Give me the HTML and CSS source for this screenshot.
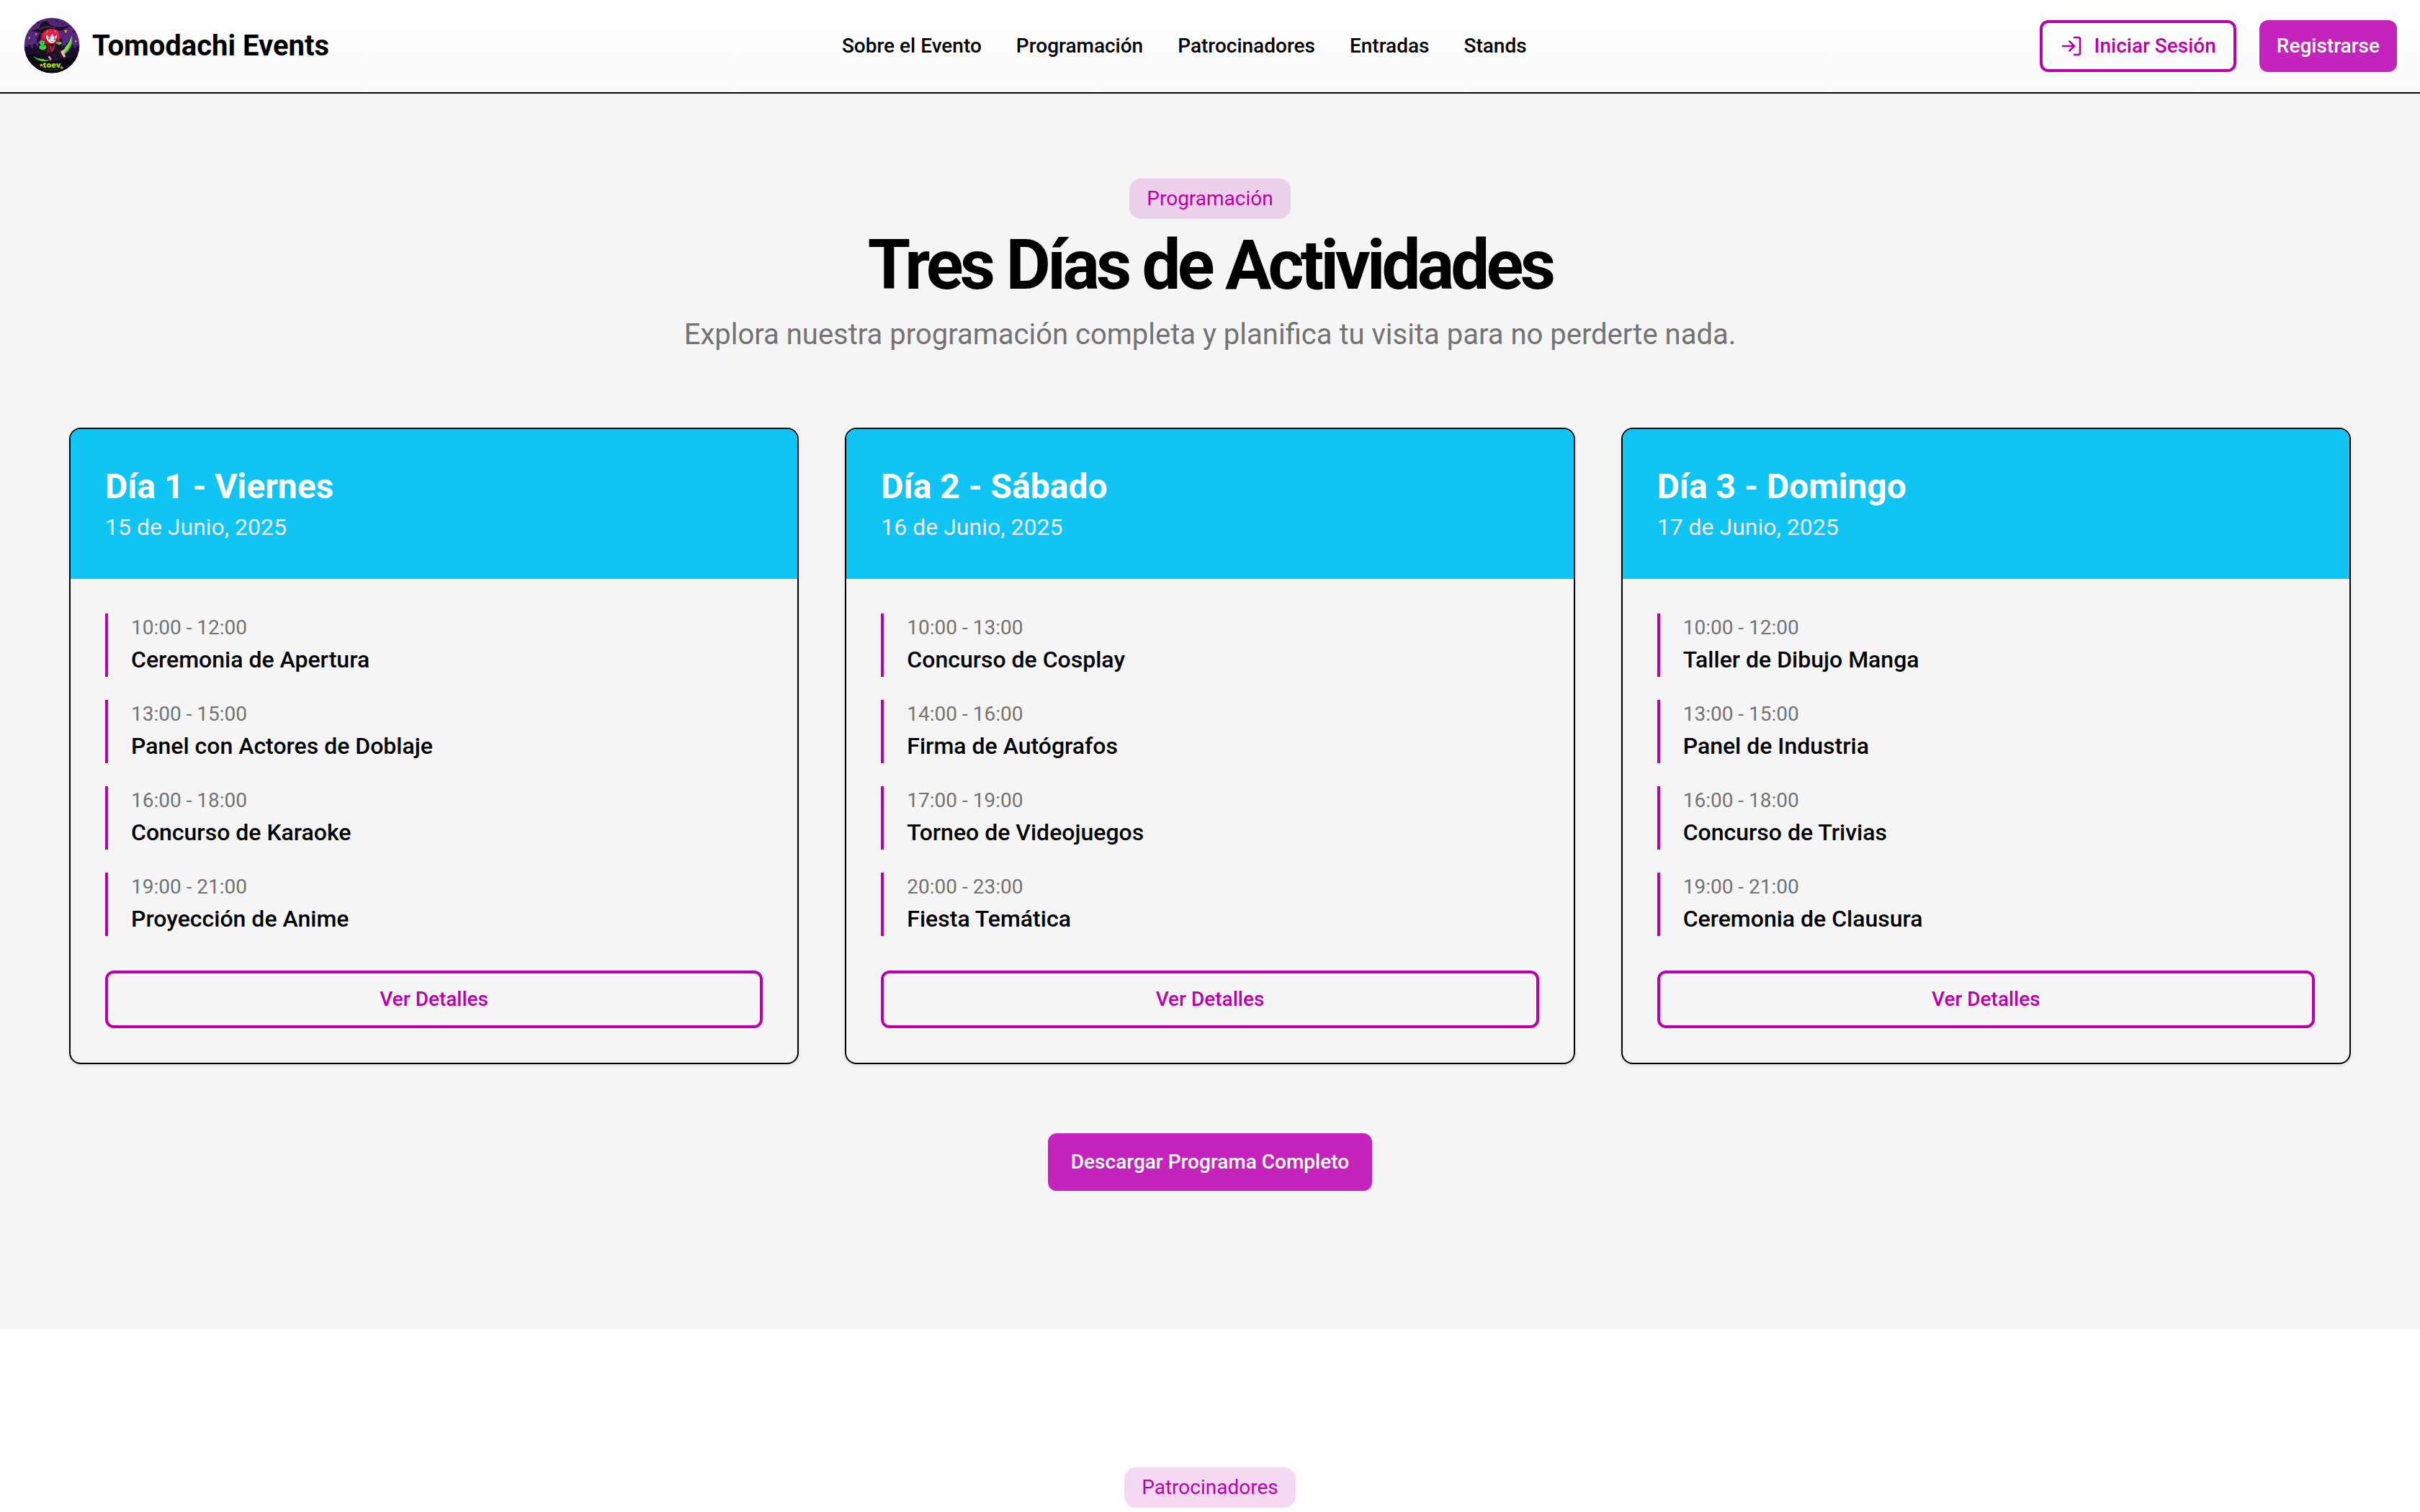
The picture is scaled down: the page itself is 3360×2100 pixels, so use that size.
FILE: index.html
```html
<!DOCTYPE html>
<html lang="es">
<head>
  <meta charset="utf-8">
  <meta name="viewport" content="width=device-width, initial-scale=1">
  <title>Tomodachi Events</title>
  <link rel="stylesheet" href="styles.css">
</head>
<body>
  <header class="site-header">
    <a class="brand" href="#">
      <svg class="brand-logo" viewBox="36 42 240 240" aria-hidden="true">
        <defs>
          <clipPath id="logo-clip"><circle cx="156" cy="159" r="115"/></clipPath>
          <linearGradient id="logo-sky" x1="0" y1="0" x2="0" y2="1">
            <stop offset="0" stop-color="#51247a"/>
            <stop offset="0.45" stop-color="#572a80"/>
            <stop offset="0.72" stop-color="#2a1240"/>
            <stop offset="1" stop-color="#0d0614"/>
          </linearGradient>
        </defs>
        <g clip-path="url(#logo-clip)">
          <rect x="36" y="42" width="240" height="240" fill="url(#logo-sky)"/>
          <path d="M36 165h20v-8h12v14h10v-18h12v10h10v-12h10v20h92v-12h14v-10h8v16h10v-8h12v14h10v-10h20v121H36z" fill="#1c0b2b"/>
          <path d="M36 205q60-20 120 0t120-6v83H36z" fill="#0c0512"/>
          <g fill="#341353">
            <path d="M93 58l7 3 6-2-3 8-8 1z"/><path d="M170 52l6 3 6-2-4 7-7 0z"/><path d="M242 96l7 3 6-2-3 8-8 1z"/><path d="M196 66l5 3 5-2-2 6-6 1z"/>
          </g>
          <g fill="#d99a3c">
            <path d="M214 91l2 5 6 1-4 4 1 6-5-3-5 3 1-6-4-4 6-1z"/>
            <circle cx="90" cy="112" r="4"/><circle cx="62" cy="128" r="4"/><circle cx="255" cy="142" r="4"/><circle cx="222" cy="163" r="2"/>
          </g>
          <path d="M238 117q12 46-28 78l-10 4q2-24 16-38 18-20 22-44z" fill="#35c51f"/>
          <path d="M238 119q4 36-34 76 4-25 17-38 12-14 17-38z" fill="#7be83b"/>
          <path d="M76 202q38 26 76 2 12-6 24-20-8 32-36 40-42 8-64-22z" fill="#2aa51b"/>
          <path d="M80 206q42 26 90-14-28 40-62 30-18-6-28-16z" fill="#59d52e"/>
          <path d="M118 138q-12 20-6 46l-8 26 26 10 60 2 16-12-8-40 2-40z" fill="#1b1020"/>
          <path d="M120 100q-10 22-4 46l14 10 46-4 10-14q4-28-12-46z" fill="#a01336"/>
          <path d="M128 108q4 38 26 42 22 0 24-38z" fill="#fbd9d4"/>
          <path d="M114 106q16-22 50-16 24 4 26 26 0 18-8 24l-6-26-10 12-8-18-12 22-10-16-10 20q-14-6-12-28z" fill="#d91f45"/>
          <path d="M136 98l-10 20 18-18zM164 94l8 16 2-12z" fill="#f05872"/>
          <ellipse cx="145" cy="129" rx="5" ry="6" fill="#318bb8"/><ellipse cx="169" cy="132" rx="5" ry="6" fill="#318bb8"/>
          <circle cx="144" cy="127" r="2" fill="#d8f5ff"/><circle cx="168" cy="130" r="2" fill="#d8f5ff"/>
          <path d="M152 141q5 5 10 1" stroke="#a14250" stroke-width="2" fill="none"/>
          <path d="M68 97q22-4 34-8 4-26 24-30 14-2 20 8l-10-1 34 16q30 4 62-6-18 18-46 24-14-12-38-10-22 4-32 20-14-4-48-13z" fill="#17101d"/>
          <path d="M102 88q30-18 68-6l4 8q-34-10-70 6z" fill="#3a2344"/>
          <path d="M104 110q-14 20-10 42l14-16 4-24z" fill="#1d1025"/>
          <path d="M138 154l16 8 18-8-4 44-16-12-18 8z" fill="#6b112b"/>
          <path d="M148 160l10 24 8-24" stroke="#e0848c" stroke-width="2" fill="none"/>
          <path d="M150 192l24-24 30 8 4 42-16-10-16 18-30 2z" fill="#1f1426"/>
          <path d="M174 174q18 12 20 34M160 196q12 6 18 24M188 176l16 26" stroke="#4b3457" stroke-width="2" fill="none"/>
          <path d="M193 184l12-8 7 3-6 8 8 20-9 2-10-16z" fill="#f1b2b7"/>
          <path d="M140 206l7-3 8 14-6 6z" fill="#e8a2a7"/>
          <path d="M104 149q2-12 14-10 10 2 8 12l-4 6q12 0 12 10-4 12-20 10-14-2-10-14l6-4z" fill="#28dd3c"/>
          <path d="M106 160q10 6 20 0" stroke="#119425" stroke-width="3" fill="none"/>
          <circle cx="116" cy="146" r="2" fill="#0d431a"/>
          <path d="M174 148l16-2 8 4-12 6zM186 139l9 12" stroke="#5bd347" stroke-width="3" fill="#d8898c"/>
          <path d="M112 232l3 6 6 0-4 5 2 6-6-3-6 3 1-7-4-4 6-1zM197 244l3 5 5 0-4 4 1 6-5-3-5 3 1-6-4-4 6-1z" fill="#e58a35"/>
          <text class="logo-word" x="156" y="251" text-anchor="middle">toev</text>
          <path d="M126 260h60" stroke="#58811f" stroke-width="2" stroke-dasharray="3 1"/>
        </g>
      </svg>
      <span class="brand-name">Tomodachi Events</span>
    </a>
    <nav class="main-nav">
      <a href="#sobre">Sobre el Evento</a>
      <a href="#programacion">Programación</a>
      <a href="#patrocinadores">Patrocinadores</a>
      <a href="#entradas">Entradas</a>
      <a href="#stands">Stands</a>
    </nav>
    <div class="header-actions">
      <button class="btn btn-outline btn-small" type="button">
        <svg class="btn-icon" viewBox="0 0 24 24" aria-hidden="true">
          <path d="M15 3h4a2 2 0 0 1 2 2v14a2 2 0 0 1-2 2h-4"/>
          <path d="M10 17l5-5-5-5"/>
          <path d="M15 12H3"/>
        </svg>
        Iniciar Sesión
      </button>
      <button class="btn btn-solid btn-small" type="button">Registrarse</button>
    </div>
  </header>

  <main>
    <section class="program" id="programacion">
      <div class="section-intro">
        <div class="badge">Programación</div>
        <h2 class="section-title">Tres Días de Actividades</h2>
        <p class="section-text">Explora nuestra programación completa y planifica tu visita para no perderte nada.</p>
      </div>

      <div class="days">
        <article class="day">
          <header class="day-header">
            <h3 class="day-title">Día 1 - Viernes</h3>
            <p class="day-date">15 de Junio, 2025</p>
          </header>
          <div class="day-body">
            <ul class="events">
              <li class="event"><p class="event-time">10:00 - 12:00</p><h4 class="event-name">Ceremonia de Apertura</h4></li>
              <li class="event"><p class="event-time">13:00 - 15:00</p><h4 class="event-name">Panel con Actores de Doblaje</h4></li>
              <li class="event"><p class="event-time">16:00 - 18:00</p><h4 class="event-name">Concurso de Karaoke</h4></li>
              <li class="event"><p class="event-time">19:00 - 21:00</p><h4 class="event-name">Proyección de Anime</h4></li>
            </ul>
            <button class="btn btn-outline" type="button">Ver Detalles</button>
          </div>
        </article>

        <article class="day">
          <header class="day-header">
            <h3 class="day-title">Día 2 - Sábado</h3>
            <p class="day-date">16 de Junio, 2025</p>
          </header>
          <div class="day-body">
            <ul class="events">
              <li class="event"><p class="event-time">10:00 - 13:00</p><h4 class="event-name">Concurso de Cosplay</h4></li>
              <li class="event"><p class="event-time">14:00 - 16:00</p><h4 class="event-name">Firma de Autógrafos</h4></li>
              <li class="event"><p class="event-time">17:00 - 19:00</p><h4 class="event-name">Torneo de Videojuegos</h4></li>
              <li class="event"><p class="event-time">20:00 - 23:00</p><h4 class="event-name">Fiesta Temática</h4></li>
            </ul>
            <button class="btn btn-outline" type="button">Ver Detalles</button>
          </div>
        </article>

        <article class="day">
          <header class="day-header">
            <h3 class="day-title">Día 3 - Domingo</h3>
            <p class="day-date">17 de Junio, 2025</p>
          </header>
          <div class="day-body">
            <ul class="events">
              <li class="event"><p class="event-time">10:00 - 12:00</p><h4 class="event-name">Taller de Dibujo Manga</h4></li>
              <li class="event"><p class="event-time">13:00 - 15:00</p><h4 class="event-name">Panel de Industria</h4></li>
              <li class="event"><p class="event-time">16:00 - 18:00</p><h4 class="event-name">Concurso de Trivias</h4></li>
              <li class="event"><p class="event-time">19:00 - 21:00</p><h4 class="event-name">Ceremonia de Clausura</h4></li>
            </ul>
            <button class="btn btn-outline" type="button">Ver Detalles</button>
          </div>
        </article>
      </div>

      <button class="btn btn-solid" type="button">Descargar Programa Completo</button>
    </section>

    <section class="sponsors" id="patrocinadores">
      <div class="badge">Patrocinadores</div>
    </section>
  </main>
</body>
</html>
```
FILE: styles.css
```css
:root {
  --primary: #ba00aa;
  --primary-solid: #c424bb;
  --primary-soft: rgba(186, 0, 170, 0.15);
  --accent: #10c4f4;
  --surface: #f5f5f5;
  --muted: #737373;
  --ink: #000;
}

* {
  box-sizing: border-box;
  margin: 0;
  padding: 0;
}

body {
  background: #fff;
  color: var(--ink);
  font-family: Roboto, "Liberation Sans", sans-serif;
  font-size: 32px;
  line-height: 48px;
}

a {
  color: inherit;
  text-decoration: none;
}

ul {
  list-style: none;
}

/* Header */
.site-header {
  display: flex;
  align-items: center;
  justify-content: space-between;
  padding: 24px 32px;
  border-bottom: 2px solid var(--ink);
  background: linear-gradient(#fff 25%, #fafafa);
}

.brand {
  display: flex;
  align-items: center;
  gap: 16px;
}

.brand-logo {
  width: 80px;
  height: 80px;
}

.logo-word {
  fill: #9be52f;
  font-family: "Open Sans", sans-serif;
  font-size: 32px;
  font-weight: 800;
}

.brand-name {
  font-size: 40px;
  font-weight: 700;
  line-height: 56px;
}

.main-nav {
  display: flex;
  gap: 48px;
  font-size: 28px;
  font-weight: 500;
  line-height: 40px;
}

.header-actions {
  display: flex;
  gap: 32px;
}

/* Buttons */
.btn {
  display: inline-flex;
  align-items: center;
  justify-content: center;
  gap: 16px;
  min-height: 80px;
  padding: 0 32px;
  border: 0;
  border-radius: 12px;
  font-family: inherit;
  font-size: 28px;
  font-weight: 500;
  line-height: 40px;
  cursor: pointer;
}

.btn-small {
  min-height: 72px;
  padding: 0 24px;
}

.btn-outline {
  border: 4px solid var(--primary);
  background: transparent;
  color: var(--primary);
}

.btn-solid {
  background: var(--primary-solid);
  color: #fff;
}

.btn-icon {
  width: 32px;
  height: 32px;
  fill: none;
  stroke: currentColor;
  stroke-width: 2;
  stroke-linecap: round;
  stroke-linejoin: round;
}

/* Sections */
.program,
.sponsors {
  display: flex;
  flex-direction: column;
  align-items: center;
}

.program {
  gap: 96px;
  padding: 118px 96px 192px;
  background: var(--surface);
}

.sponsors {
  padding: 192px 96px 0;
}

.section-intro {
  display: flex;
  flex-direction: column;
  align-items: center;
  gap: 16px;
  text-align: center;
}

.badge {
  padding: 8px 24px;
  border-radius: 16px;
  background: var(--primary-soft);
  color: var(--primary);
  font-size: 28px;
  line-height: 40px;
}

.section-title {
  font-size: 96px;
  font-weight: 700;
  letter-spacing: -0.05em;
  line-height: 96px;
}

.section-text {
  color: var(--muted);
  font-size: 40px;
  line-height: 66px;
}

/* Day cards */
.days {
  display: grid;
  grid-template-columns: repeat(3, 1fr);
  gap: 64px;
  width: 100%;
}

.day {
  overflow: hidden;
  border: 2px solid var(--ink);
  border-radius: 16px;
  box-shadow: 0 2px 4px rgba(0, 0, 0, 0.1);
}

.day-header {
  padding: 48px;
  background: var(--accent);
}

.day-title {
  color: #fff;
  font-size: 48px;
  font-weight: 700;
  line-height: 64px;
}

.day-date {
  color: #ecebf7;
}

.day-body {
  display: flex;
  flex-direction: column;
  gap: 48px;
  padding: 48px;
}

.events {
  display: flex;
  flex-direction: column;
  gap: 32px;
}

.event {
  padding-left: 32px;
  border-left: 4px solid var(--primary);
}

.event-time {
  color: var(--muted);
  font-size: 28px;
  line-height: 40px;
}

.event-name {
  font-size: 32px;
  font-weight: 500;
}
```
